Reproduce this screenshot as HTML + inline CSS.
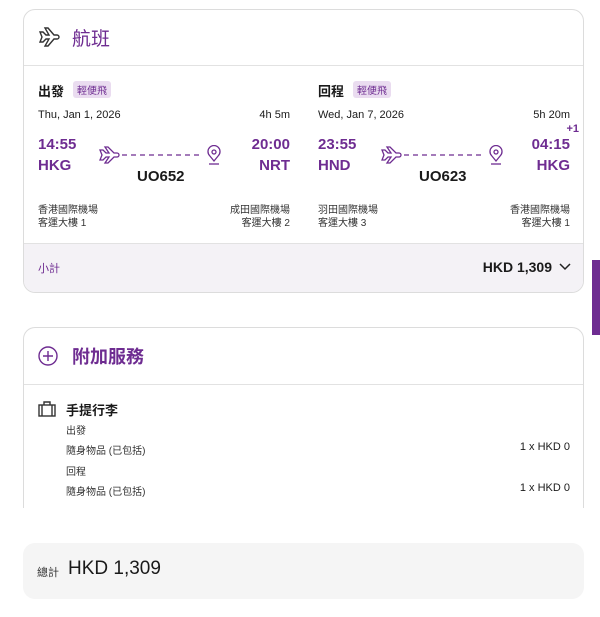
<!DOCTYPE html>
<html><head><meta charset="utf-8"><style>
*{margin:0;padding:0;box-sizing:border-box}
body{width:600px;height:617px;background:#fff;font-family:"Liberation Sans","Noto Sans CJK TC",sans-serif;color:#1a1a1a;position:relative;overflow:hidden}
.a{position:absolute;white-space:nowrap}
.p{color:#6e2c91}
.card{position:absolute;left:23px;width:561px;border:1px solid #dcdcdc;border-radius:12px;background:#fff;overflow:hidden}
.tag{background:#eadcf0;color:#6e2c91;font-size:10px;padding:1px 4px;border-radius:3px}
.b{font-weight:bold}
</style></head><body>
<div class="card" style="top:9px;height:284px">
  <div class="a" style="left:0;top:55px;width:561px;border-top:1px solid #e2e2e2"></div>
  <div class="a" style="left:0;top:233px;width:561px;height:51px;background:#f4f2f6;border-top:1px solid #e2e2e2"></div>
</div>
<svg class="a" style="left:38px;top:27px" width="22" height="20" viewBox="0 0 22 20" fill="none" stroke="#333" stroke-width="1.4"><path d="M2 5l3 0 3 3h3L7 1h3l6 7h3a2 2 0 010 4h-3l-6 7H7l4-7H8l-3 3H2l2-5z"/></svg>
<div class="a p" style="left:72px;top:24px;font-size:19px">航班</div>

<div class="a b" style="left:38px;top:81px;font-size:13px">出發</div>
<div class="a tag" style="left:73px;top:81px">輕便飛</div>
<div class="a" style="left:38px;top:109px;font-size:11px">Thu, Jan 1, 2026</div>
<div class="a" style="right:310px;top:109px;font-size:11px">4h 5m</div>
<div class="a p b" style="left:38px;top:136px;font-size:15px">14:55</div>
<div class="a p b" style="left:38px;top:157px;font-size:15px">HKG</div>
<div class="a p b" style="right:310px;top:136px;font-size:15px">20:00</div>
<div class="a p b" style="right:310px;top:157px;font-size:15px">NRT</div>
<div class="a b" style="left:137px;top:168px;font-size:15px">UO652</div>
<svg class="a" style="left:99px;top:145px" width="126" height="22" viewBox="0 0 126 22" fill="none" stroke="#6e2c91" stroke-width="1.3"><path d="M1 5h3l3 3h3L6 2h3l6 6h3a2 2 0 010 4h-3l-6 6H6l4-6H7l-3 3H1l2-5z"/><path d="M23 10h78" stroke-dasharray="5 4"/><path d="M115 16l-4.5-5.5a6 6 0 119 0z"/><circle cx="115" cy="7" r="2"/><path d="M110 19h10"/></svg>
<div class="a" style="left:38px;top:201px;font-size:10px;color:#333">香港國際機場</div>
<div class="a" style="left:38px;top:214px;font-size:10px;color:#333">客運大樓 1</div>
<div class="a" style="right:310px;top:201px;font-size:10px;color:#333">成田國際機場</div>
<div class="a" style="right:310px;top:214px;font-size:10px;color:#333">客運大樓 2</div>

<div class="a b" style="left:318px;top:81px;font-size:13px">回程</div>
<div class="a tag" style="left:353px;top:81px">輕便飛</div>
<div class="a" style="left:318px;top:109px;font-size:11px">Wed, Jan 7, 2026</div>
<div class="a" style="right:30px;top:109px;font-size:11px">5h 20m</div>
<div class="a p b" style="right:21px;top:123px;font-size:11px">+1</div>
<div class="a p b" style="left:318px;top:136px;font-size:15px">23:55</div>
<div class="a p b" style="left:318px;top:157px;font-size:15px">HND</div>
<div class="a p b" style="right:30px;top:136px;font-size:15px">04:15</div>
<div class="a p b" style="right:30px;top:157px;font-size:15px">HKG</div>
<div class="a b" style="left:419px;top:168px;font-size:15px">UO623</div>
<svg class="a" style="left:381px;top:145px" width="126" height="22" viewBox="0 0 126 22" fill="none" stroke="#6e2c91" stroke-width="1.3"><path d="M1 5h3l3 3h3L6 2h3l6 6h3a2 2 0 010 4h-3l-6 6H6l4-6H7l-3 3H1l2-5z"/><path d="M23 10h78" stroke-dasharray="5 4"/><path d="M115 16l-4.5-5.5a6 6 0 119 0z"/><circle cx="115" cy="7" r="2"/><path d="M110 19h10"/></svg>
<div class="a" style="left:318px;top:201px;font-size:10px;color:#333">羽田國際機場</div>
<div class="a" style="left:318px;top:214px;font-size:10px;color:#333">客運大樓 3</div>
<div class="a" style="right:30px;top:201px;font-size:10px;color:#333">香港國際機場</div>
<div class="a" style="right:30px;top:214px;font-size:10px;color:#333">客運大樓 1</div>

<div class="a p" style="left:38px;top:260px;font-size:11px">小計</div>
<div class="a b" style="right:48px;top:259px;font-size:14px">HKD 1,309</div>
<svg class="a" style="left:558px;top:262px" width="14" height="10" viewBox="0 0 14 10" fill="none" stroke="#222" stroke-width="1.5"><path d="M2 2l5 5 5-5"/></svg>
<div class="a" style="left:592px;top:260px;width:8px;height:75px;background:#6e2c91"></div>

<div class="card" style="top:327px;height:200px;border-bottom:none;border-radius:12px 12px 0 0">
  <div class="a" style="left:0;top:56px;width:561px;border-top:1px solid #e2e2e2"></div>
</div>
<div class="a" style="left:0;top:508px;width:600px;height:30px;background:#fff"></div>
<svg class="a" style="left:37px;top:345px" width="22" height="22" viewBox="0 0 22 22" fill="none" stroke="#6e2c91" stroke-width="1.4"><circle cx="11" cy="11" r="9"/><path d="M11 6v10M6 11h10"/></svg>
<div class="a p b" style="left:72px;top:343px;font-size:18px">附加服務</div>
<svg class="a" style="left:38px;top:401px" width="18" height="16" viewBox="0 0 18 16" fill="none" stroke="#333" stroke-width="1.4"><rect x="1" y="4" width="16" height="11"/><path d="M6 4V1h6v3M4 4v11M14 4v11"/></svg>
<div class="a b" style="left:66px;top:400px;font-size:13px">手提行李</div>
<div class="a" style="left:66px;top:422px;font-size:10px;color:#333">出發</div>
<div class="a" style="left:66px;top:442px;font-size:10px;color:#333">隨身物品 (已包括)</div>
<div class="a" style="right:30px;top:441px;font-size:11px">1 x HKD 0</div>
<div class="a" style="left:66px;top:463px;font-size:10px;color:#333">回程</div>
<div class="a" style="left:66px;top:483px;font-size:10px;color:#333">隨身物品 (已包括)</div>
<div class="a" style="right:30px;top:482px;font-size:11px">1 x HKD 0</div>

<div class="a" style="left:23px;top:543px;width:561px;height:56px;background:#f5f5f5;border-radius:12px"></div>
<div class="a" style="left:37px;top:564px;font-size:11px;color:#333">總計</div>
<div class="a" style="left:68px;top:558px;font-size:19px">HKD 1,309</div>
</body></html>
